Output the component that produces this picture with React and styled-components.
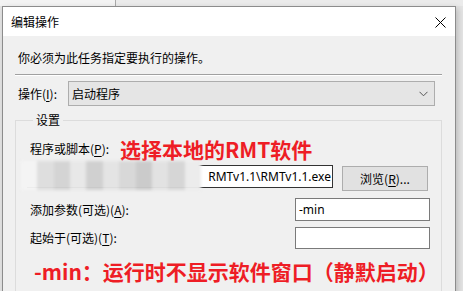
import styled, { createGlobalStyle } from "styled-components";

const Global = createGlobalStyle`
  html, body {
    margin: 0;
    padding: 0;
    background: #e4e4e4;
    overflow: hidden;
  }
  body {
    font-family: "Noto Sans CJK SC", "Noto Sans", sans-serif;
    font-size: 12px;
    color: #000;
  }
`;

const Page = styled.div`
  width: 463px;
  height: 291px;
  display: flex;
  flex-direction: column;
  overflow: hidden;
`;

const BackStrip = styled.div`
  height: 6px;
  flex: none;
  display: flex;
  background: #ebebeb;
  div {
    width: 115px;
    height: 100%;
    background: #f3f3f3;
    border-right: 1px solid #a8a8a8;
  }
`;

const Stage = styled.div`
  display: flex;
  flex: 1;
  padding-left: 2px;
`;

const Dialog = styled.div`
  width: 454px;
  height: 320px;
  flex: none;
  box-sizing: border-box;
  border: 1px solid #8c8c8c;
  background: #f0f0f0;
  box-shadow: 2px 2px 6px rgba(0, 0, 0, 0.18);
  display: flex;
  flex-direction: column;
`;

const TitleBar = styled.div`
  height: 29px;
  flex: none;
  background: #fff;
  display: flex;
  align-items: center;
  justify-content: space-between;
  padding: 0 9px 0 8px;
  font-size: 12px;
`;

const Close = styled.svg`
  width: 11px;
  height: 11px;
  margin-top: 1px;
`;

const Body = styled.div`
  display: flex;
  flex-direction: column;
  padding: 0 13px 0 12px;
`;

const Intro = styled.div`
  margin: 14px 0 0 3px;
  line-height: 16px;
`;

const Separator = styled.div`
  margin-top: 8px;
  height: 1px;
  background: #a0a0a0;
  border-bottom: 1px solid #fff;
`;

const ActionRow = styled.div`
  display: flex;
  align-items: center;
  margin-top: 5px;
  padding-left: 3px;
`;

const Label = styled.span`
  line-height: 16px;
  width: ${(p) => p.$w || "auto"};
  flex: none;
  margin-left: ${(p) => p.$ml || "0"};
  u {
    text-decoration-thickness: 1px;
    text-underline-offset: 2px;
  }
`;

const Combo = styled.div`
  margin-left: auto;
  margin-right: 7px;
  width: 367px;
  height: 25px;
  box-sizing: border-box;
  border: 1px solid #adadad;
  background: #e5e5e5;
  display: flex;
  align-items: center;
  justify-content: space-between;
  padding: 0 6px 0 3px;
`;

const Group = styled.fieldset`
  margin: 6px 0 0 0;
  border: 1px solid #dcdcdc;
  padding: 0 13px 20px 11px;
  min-width: 0;
  legend {
    margin-left: 6px;
    padding: 0 3px;
    line-height: 16px;
  }
`;

const Row = styled.div`
  display: flex;
  align-items: ${(p) => p.$align || "center"};
  margin-top: ${(p) => p.$mt || "0"};
  height: ${(p) => p.$h || "auto"};
`;

const Hint = styled.div`
  color: #ee1d25;
  font-weight: 700;
  font-size: 21px;
  line-height: 28px;
  margin-left: ${(p) => p.$ml || "0"};
  white-space: nowrap;
`;

const PathField = styled.div`
  position: relative;
  width: 306px;
  height: 23px;
  box-sizing: border-box;
  border: 1px solid #333;
  background: #fff;
  display: flex;
  align-items: center;
  justify-content: flex-end;
  padding-right: 1px;
  span {
    font-family: "Noto Sans", "Open Sans", sans-serif;
    font-size: 12px;
    white-space: nowrap;
  }
`;

const Mosaic = styled.div`
  position: absolute;
  left: -7px;
  top: -5px;
  width: 180px;
  height: 29px;
  display: flex;
  filter: blur(1.5px);
`;

const Tile = styled.div`
  flex: 1;
  background: ${(p) => p.$c};
`;

const Browse = styled.div`
  margin: 1px 0 0 9px;
  width: 86px;
  height: 25px;
  box-sizing: border-box;
  border: 1px solid #adadad;
  background: #e1e1e1;
  display: flex;
  align-items: center;
  justify-content: center;
  u {
    text-underline-offset: 2px;
  }
`;

const Field = styled.div`
  margin-left: auto;
  margin-right: -2px;
  width: 135px;
  height: ${(p) => p.$h || "23px"};
  box-sizing: border-box;
  border: 1px solid #7a7a7a;
  background: #fff;
  display: flex;
  align-items: center;
  padding-left: 3px;
  font-family: "Noto Sans", "Open Sans", sans-serif;
  font-size: 12px;
`;

const tiles = [
  "#f4f4f4",
  "#dedede",
  "#d4d4d4",
  "#e8e8e8",
  "#d0d0d0",
  "#e4e4e4",
  "#d8d8d8",
  "#cbcbcb",
  "#e2e2e2",
  "#d6d6d6",
  "#ececec",
];

export default function App() {
  return (
    <Page>
      <Global />
      <BackStrip>
        <div />
      </BackStrip>
      <Stage>
        <Dialog>
          <TitleBar>
            <span>编辑操作</span>
            <Close viewBox="0 0 11 11">
              <path d="M0.5 0.5 L10.5 10.5 M10.5 0.5 L0.5 10.5" stroke="#000" strokeWidth="1" fill="none" />
            </Close>
          </TitleBar>
          <Body>
            <Intro>你必须为此任务指定要执行的操作。</Intro>
            <Separator />
            <ActionRow>
              <Label>
                操作(<u>I</u>):
              </Label>
              <Combo>
                <span>启动程序</span>
                <svg width="9" height="6" viewBox="0 0 9 6">
                  <path d="M0.5 0.8 L4.5 4.8 L8.5 0.8" stroke="#555" strokeWidth="1" fill="none" />
                </svg>
              </Combo>
            </ActionRow>
            <Group>
              <legend>设置</legend>
              <Row $mt="7px" $h="28px">
                <Label $ml="3px" $w="90px">
                  程序或脚本(<u>P</u>):
                </Label>
                <Hint>选择本地的RMT软件</Hint>
              </Row>
              <Row $align="flex-start" $mt="2px">
                <PathField>
                  <span>RMTv1.1\RMTv1.1.exe</span>
                  <Mosaic>
                    {tiles.map((c, i) => (
                      <Tile key={i} $c={c} />
                    ))}
                  </Mosaic>
                </PathField>
                <Browse>
                  浏览(<u>R</u>)...
                </Browse>
              </Row>
              <Row $mt="7px">
                <Label $ml="3px">
                  添加参数(可选)(<u>A</u>):
                </Label>
                <Field>-min</Field>
              </Row>
              <Row $mt="6px">
                <Label $ml="3px">
                  起始于(可选)(<u>T</u>):
                </Label>
                <Field $h="22px" />
              </Row>
              <Row $mt="8px">
                <Hint $ml="7px">-min：运行时不显示软件窗口（静默启动）</Hint>
              </Row>
            </Group>
          </Body>
        </Dialog>
      </Stage>
    </Page>
  );
}
